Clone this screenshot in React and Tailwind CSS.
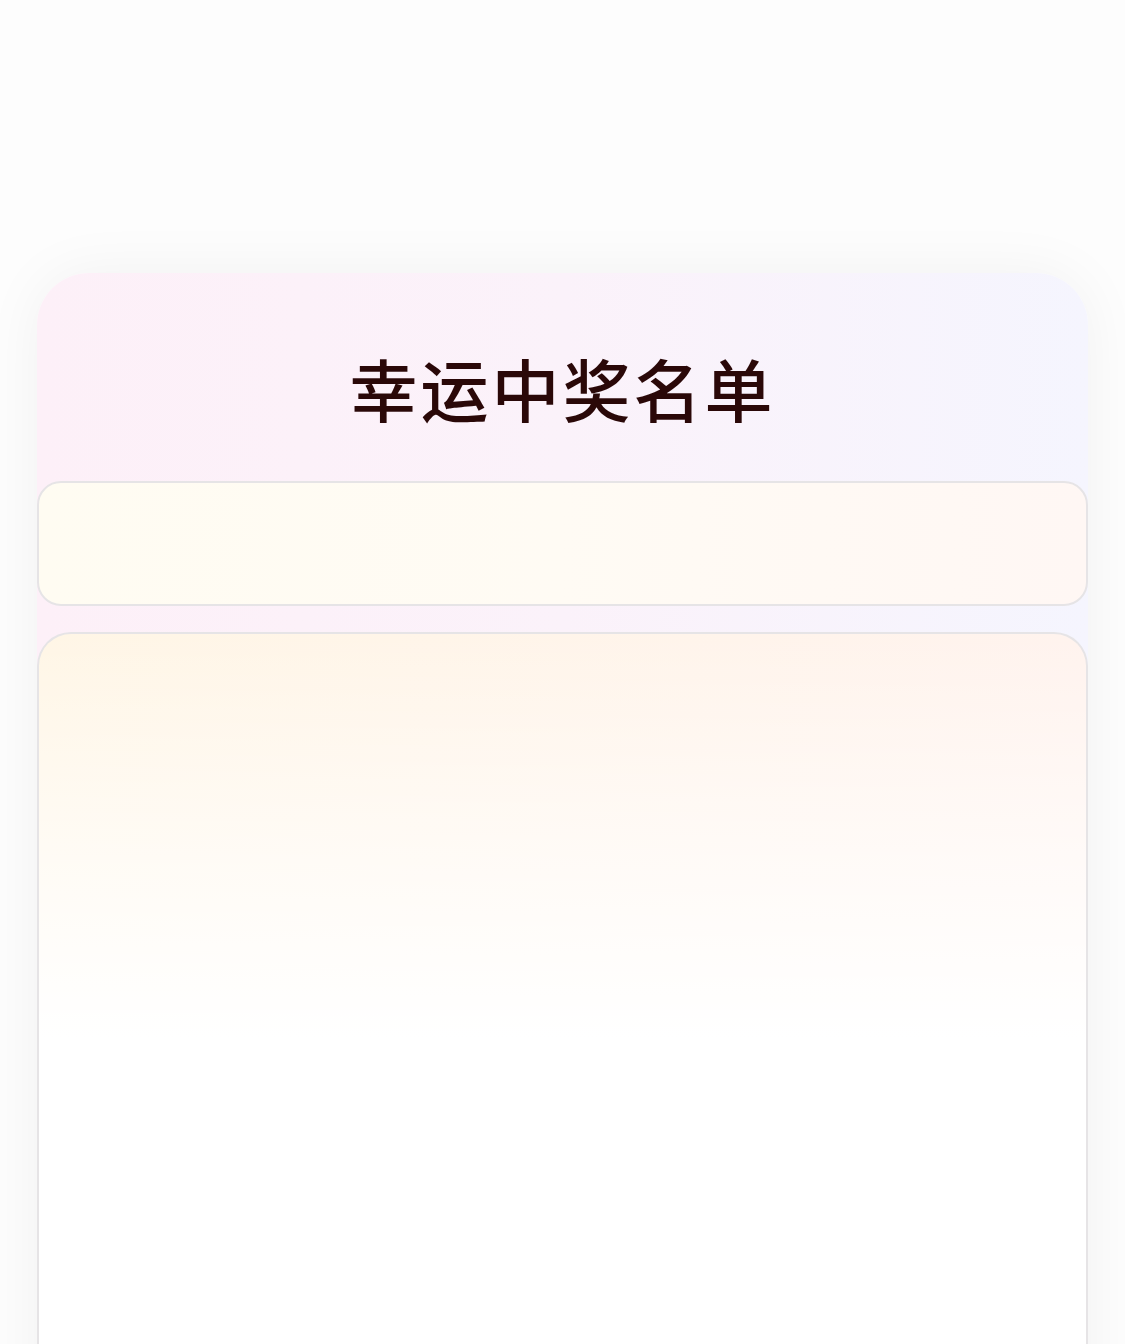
export default function App() {
  return (
    <div className="min-h-[1344px] w-full overflow-hidden bg-[#fdfdfd] pt-[273px] font-['Noto_Sans_CJK_SC','Noto_Sans',sans-serif]">
      <div className="mx-[37px] rounded-t-[52px] bg-gradient-to-r from-[#fdf0f8] via-[#fbf2fa] to-[#f5f5fe] shadow-[0_0_60px_rgba(0,0,0,0.05)]">
        <div className="flex h-[208px] items-center justify-center pt-[22px]">
          <h1 className="text-[68px] font-medium leading-none tracking-[3px] text-[#2a0808]">幸运中奖名单</h1>
        </div>
        <div className="h-[125px] rounded-[24px] border-2 border-[#e6e4e6] bg-gradient-to-r from-[#fffcf2] via-[#fffbf4] to-[#fff7f4]" />
        <div className="h-[26px]" />
        <div className="h-[900px] rounded-t-[34px] border-2 border-b-0 border-[#e6e4e6] bg-[linear-gradient(to_bottom,rgba(255,255,255,0)_0%,rgba(255,255,255,0.6)_25%,#ffffff_45%),linear-gradient(to_right,#fff6e6,#fff3ee)]" />
      </div>
    </div>
  )
}
